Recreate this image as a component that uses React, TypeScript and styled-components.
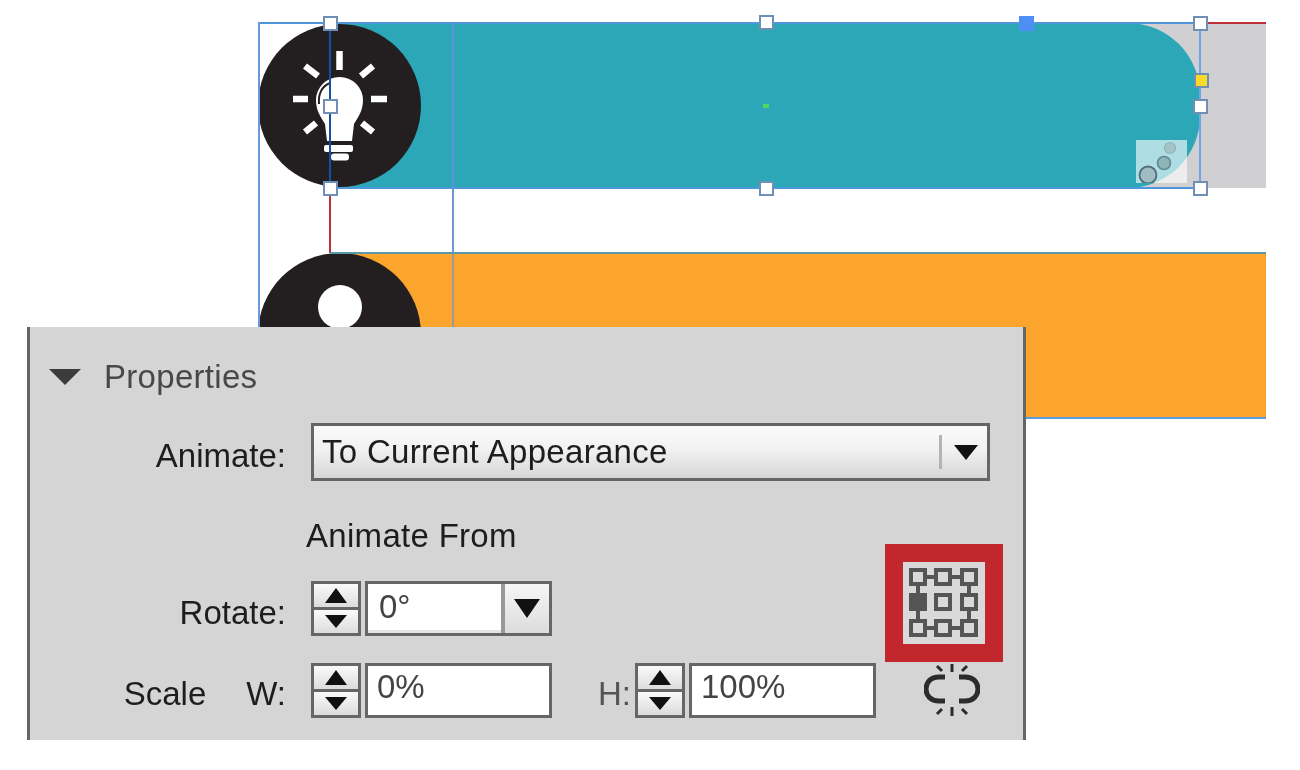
import React from 'react';
import styled, { createGlobalStyle } from 'styled-components';

const GlobalStyle = createGlobalStyle`
  html, body {
    margin: 0;
    background: #fff;
  }
  body {
    font-family: "Liberation Sans", Arial, sans-serif;
  }
`;

const Stage = styled.div`
  position: relative;
  width: 1300px;
  height: 770px;
  padding: 23px 34px 0 258px;
  box-sizing: border-box;
  overflow: hidden;
  background: #fff;
  filter: blur(0.45px);
`;

const Row = styled.div`
  display: flex;
  height: 165px;
  margin-bottom: 65px;
`;

const Circle = styled.div`
  flex: none;
  width: 163px;
  height: 163px;
  margin-top: 1px;
  border-radius: 50%;
  background: #231f20;
  z-index: 1;
`;

const DotCircle = styled(Circle)`
  display: flex;
  justify-content: center;
  align-items: flex-start;
  margin-top: 0;
  padding-top: 32px;
  height: 131px;
  border-radius: 81.5px 81.5px 0 0;
`;

const Dot = styled.div`
  width: 44px;
  height: 44px;
  border-radius: 50%;
  background: #fff;
`;

const Bar = styled.div<{ $color: string }>`
  flex: 1;
  display: flex;
  margin-left: -91px;
  background: ${(p) => p.$color};
`;

const Pill = styled.div`
  position: relative;
  width: 870px;
  background: #2ba7b7;
  border-radius: 0 72px 72px 0;
`;

const Thumb = styled.div`
  position: absolute;
  right: 13px;
  bottom: 5px;
  width: 51px;
  height: 43px;
  background: rgba(255, 255, 255, 0.62);
`;

const Guide = styled.div<{ $x: number; $y: number; $w: number; $h: number; $color: string }>`
  position: absolute;
  left: ${(p) => p.$x}px;
  top: ${(p) => p.$y}px;
  width: ${(p) => p.$w}px;
  height: ${(p) => p.$h}px;
  background: ${(p) => p.$color};
  z-index: 2;
`;

const Handle = styled.div<{ $x: number; $y: number; $fill?: string }>`
  position: absolute;
  left: ${(p) => p.$x - 7}px;
  top: ${(p) => p.$y - 7}px;
  width: 15px;
  height: 15px;
  box-sizing: border-box;
  border: 2px solid ${(p) => (p.$fill === '#4d8ff5' ? '#4d8ff5' : '#6f8fb5')};
  background: ${(p) => p.$fill || '#fff'};
  z-index: 3;
`;

const Panel = styled.div`
  position: absolute;
  left: 27px;
  top: 327px;
  width: 999px;
  height: 413px;
  box-sizing: border-box;
  padding-top: 30px;
  background: #d5d5d5;
  border-left: 3px solid #666;
  border-right: 3px solid #666;
  color: #1d1d1d;
  font-size: 33px;
  line-height: 40px;
  z-index: 4;
`;

const Header = styled.div`
  display: flex;
  align-items: center;
  gap: 23px;
  padding-left: 19px;
  color: #484848;
  letter-spacing: 0.3px;
`;

const Triangle = styled.span<{ $w: number; $h: number; $color?: string }>`
  flex: none;
  width: 0;
  height: 0;
  border-left: ${(p) => p.$w / 2}px solid transparent;
  border-right: ${(p) => p.$w / 2}px solid transparent;
  border-top: ${(p) => p.$h}px solid ${(p) => p.$color || '#111'};
`;

const UpTriangle = styled(Triangle)`
  border-top: 0;
  border-bottom: ${(p) => p.$h}px solid #111;
`;

const FieldRow = styled.div<{ $top: number }>`
  display: flex;
  align-items: center;
  gap: 25px;
  margin-top: ${(p) => p.$top}px;
`;

const Label = styled.div`
  flex: none;
  display: flex;
  justify-content: flex-end;
  gap: 40px;
  width: 256px;
  padding-top: 8px;
`;

const Select = styled.div`
  display: flex;
  align-items: center;
  box-sizing: border-box;
  width: 679px;
  height: 58px;
  padding: 0 9px 0 8px;
  border: 3px solid #666;
  background: linear-gradient(#fbfbfb, #f1f1f1 45%, #d6d6d6);
`;

const SelectText = styled.span`
  flex: 1;
  letter-spacing: 0.3px;
`;

const SelectDivider = styled.span`
  width: 3px;
  height: 34px;
  margin-right: 12px;
  background: #b3b3b3;
`;

const Caption = styled.div`
  margin: 35px 0 0 276px;
  letter-spacing: 0.3px;
`;

const Controls = styled.div`
  display: flex;
  align-items: center;
  gap: 4px;
`;

const Stepper = styled.div`
  display: flex;
  flex: none;
  flex-direction: column;
  box-sizing: border-box;
  width: 50px;
  height: 55px;
  border: 3px solid #666;
  background: #666;
  gap: 3px;
`;

const StepButton = styled.div`
  flex: 1;
  display: flex;
  align-items: center;
  justify-content: center;
  background: linear-gradient(#fafafa, #dcdcdc);
`;

const Input = styled.div<{ $w: number }>`
  flex: none;
  display: flex;
  align-items: center;
  box-sizing: border-box;
  width: ${(p) => p.$w}px;
  height: 55px;
  padding: 0 0 7px 9px;
  border: 3px solid #666;
  background: #fff;
  color: #444;
`;

const Combo = styled.div`
  flex: none;
  display: flex;
  box-sizing: border-box;
  width: 187px;
  height: 55px;
  border: 3px solid #666;
  background: #fff;
  color: #444;
`;

const ComboValue = styled.div`
  flex: 1;
  padding: 3px 0 0 11px;
  border-right: 4px solid #999;
  box-shadow: inset 0 -3px 0 #e4e4e4;
`;

const ComboArrow = styled.div`
  display: flex;
  align-items: center;
  justify-content: center;
  width: 44px;
  background: linear-gradient(#f6f6f6, #dcdcdc);
`;

const HeightLabel = styled.div`
  flex: none;
  margin-left: 42px;
  padding-top: 8px;
  color: #555;
`;

const LinkButton = styled.svg`
  flex: none;
  display: block;
  width: 56px;
  height: 56px;
  margin-left: 44px;
`;

const Callout = styled.div`
  position: absolute;
  left: 855px;
  top: 217px;
  display: flex;
  align-items: center;
  justify-content: center;
  width: 82px;
  height: 82px;
  border: 18px solid #c1272d;
  background: #d9d9d9;
`;

const Bulb = () => (
  <svg width="163" height="163" viewBox="0 0 163 163" style={{ display: 'block' }}>
    <path
      d="M81.5 27v19M35 75h15M113 75h16M47 42l13 10M115 42l-12 10M47 108l11-9M115 108l-11-9"
      stroke="#fff"
      strokeWidth="6.5"
      fill="none"
    />
    <path
      d="M69 117L67 100C62 92 58 86 58 76A23.5 23 0 0 1 105 76C105 86 101 92 96 100L94 117Z"
      fill="#fff"
    />
    <path d="M61 80C60 70 64 62 72 59" stroke="#231f20" strokeWidth="2" fill="none" />
    <rect x="66" y="121" width="29" height="7" rx="2" fill="#fff" />
    <rect x="73" y="129.5" width="18" height="7" rx="3" fill="#fff" />
  </svg>
);

const Bubbles = () => (
  <svg width="51" height="43" viewBox="0 0 51 43" style={{ display: 'block' }}>
    <circle cx="12" cy="35" r="8.5" fill="#9fbcc2" stroke="#4f6f78" strokeWidth="1.8" />
    <circle cx="28" cy="23" r="6.5" fill="#8fb5bb" stroke="#5f8a94" strokeWidth="1.6" />
    <circle cx="34" cy="8" r="5.5" fill="#a4c4c8" stroke="#93b3b8" strokeWidth="1.2" />
  </svg>
);

const anchors = [0, 25, 51];

const AnchorGrid = () => (
  <svg width="70" height="70" viewBox="0 0 70 70" style={{ display: 'block' }}>
    <g stroke="#555" strokeWidth="4" fill="none">
      <path d="M18 9h7M43 9h8M18 60h7M43 60h8M9 18v7M9 43v8M60 18v7M60 43v8" />
      {anchors.map((y) =>
        anchors.map((x) => (
          <rect
            key={`${x}-${y}`}
            x={x + 2}
            y={y + 2}
            width="14"
            height="14"
            fill={x === 0 && y === 25 ? '#555' : 'none'}
          />
        )),
      )}
    </g>
  </svg>
);

const StepControl = () => (
  <Stepper>
    <StepButton>
      <UpTriangle $w={22} $h={15} />
    </StepButton>
    <StepButton>
      <Triangle $w={22} $h={13} />
    </StepButton>
  </Stepper>
);

const App: React.FC = () => (
  <>
    <GlobalStyle />
    <Stage>
      <Row>
        <Circle>
          <Bulb />
        </Circle>
        <Bar $color="#d0d0d2">
          <Pill>
            <Thumb>
              <Bubbles />
            </Thumb>
          </Pill>
        </Bar>
      </Row>
      <Row>
        <DotCircle>
          <Dot />
        </DotCircle>
        <Bar $color="#fba52d" />
      </Row>

      <Guide $x={258} $y={22} $w={942} $h={2} $color="#4f97dd" />
      <Guide $x={330} $y={187} $w={870} $h={2} $color="#4f97dd" />
      <Guide $x={1199} $y={22} $w={2} $h={167} $color="#70a4ec" />
      <Guide $x={258} $y={22} $w={2} $h={306} $color="#6b98d8" />
      <Guide $x={452} $y={22} $w={2} $h={166} $color="#5d92d6" />
      <Guide $x={452} $y={188} $w={2} $h={65} $color="#7196d4" />
      <Guide $x={452} $y={253} $w={2} $h={75} $color="#9a9a9a" />
      <Guide $x={329} $y={22} $w={2} $h={166} $color="#14509e" />
      <Guide $x={329} $y={188} $w={2} $h={65} $color="#c0303c" />
      <Guide $x={1207} $y={22} $w={59} $h={2} $color="#c0303c" />
      <Guide $x={330} $y={252} $w={936} $h={2} $color="#5a9aa8" />
      <Guide $x={330} $y={417} $w={936} $h={2} $color="#5a9ce0" />
      <Guide $x={763} $y={104} $w={6} $h={4} $color="#4fd65e" />

      <Handle $x={330} $y={23} />
      <Handle $x={766} $y={22} />
      <Handle $x={1026} $y={23} $fill="#4d8ff5" />
      <Handle $x={1200} $y={23} />
      <Handle $x={1201} $y={80} $fill="#fbd928" />
      <Handle $x={1200} $y={106} />
      <Handle $x={330} $y={106} />
      <Handle $x={330} $y={188} />
      <Handle $x={766} $y={188} />
      <Handle $x={1200} $y={188} />

      <Panel>
        <Header>
          <Triangle $w={33} $h={16} $color="#3c3c3c" />
          Properties
        </Header>

        <FieldRow $top={26}>
          <Label>Animate:</Label>
          <Select>
            <SelectText>To Current Appearance</SelectText>
            <SelectDivider />
            <Triangle $w={24} $h={15} />
          </Select>
        </FieldRow>

        <Caption>Animate From</Caption>

        <FieldRow $top={25}>
          <Label>Rotate:</Label>
          <Controls>
            <StepControl />
            <Combo>
              <ComboValue>0°</ComboValue>
              <ComboArrow>
                <Triangle $w={26} $h={19} />
              </ComboArrow>
            </Combo>
          </Controls>
        </FieldRow>

        <FieldRow $top={26}>
          <Label>
            <span>Scale</span>
            <span>W:</span>
          </Label>
          <Controls>
            <StepControl />
            <Input $w={187}>0%</Input>
            <HeightLabel>H:</HeightLabel>
            <StepControl />
            <Input $w={187}>100%</Input>
            <LinkButton viewBox="0 0 56 56">
              <g fill="none" stroke="#2c2c2c">
                <path
                  d="M21 15H15C7 15 2 20 2 27S7 39 15 39H21M35 15H41C49 15 54 20 54 27S49 39 41 39H35"
                  strokeWidth="5"
                />
                <path
                  d="M28 2v8M13 4l5 5M43 4l-5 5M28 45v9M13 52l5-5M43 52l-5-5"
                  strokeWidth="3"
                />
              </g>
            </LinkButton>
          </Controls>
        </FieldRow>

        <Callout>
          <AnchorGrid />
        </Callout>
      </Panel>
    </Stage>
  </>
);

export default App;
